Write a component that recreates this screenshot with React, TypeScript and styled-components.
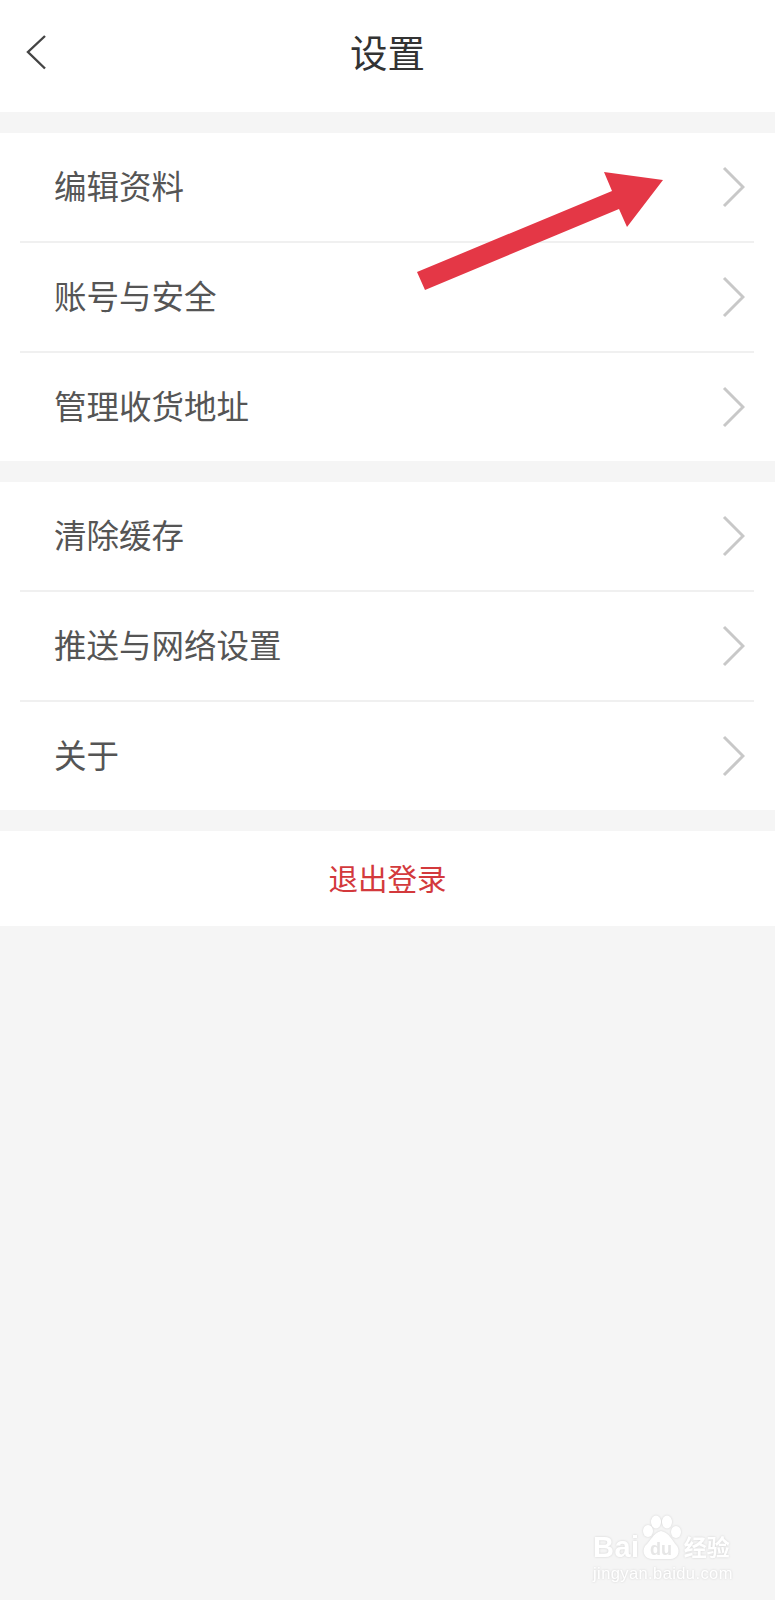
import React from "react";
import styled, { createGlobalStyle } from "styled-components";

const GlobalStyle = createGlobalStyle`
  html, body {
    margin: 0;
    padding: 0;
    background: #f5f5f5;
  }
  body {
    font-family: "Liberation Sans", "Noto Sans CJK SC", sans-serif;
  }
`;

const Page = styled.div`
  position: relative;
  width: 775px;
  height: 1600px;
  overflow: hidden;
  background: #f5f5f5;
`;

const Header = styled.header`
  position: relative;
  display: flex;
  align-items: center;
  justify-content: center;
  height: 112px;
  background: #fff;
  margin-bottom: 21px;
`;

const Title = styled.h1`
  margin: 0 0 12px;
  font-size: 37.5px;
  font-weight: 400;
  color: #333;
`;

const BackIcon = styled.svg`
  position: absolute;
  left: 25px;
  top: 33px;
  width: 24px;
  height: 38px;
  fill: none;
  stroke: #444;
  stroke-width: 2.4;
`;

const Group = styled.section`
  background: #fff;
  margin-bottom: 21px;
`;

const Row = styled.div<{ $height: number }>`
  display: flex;
  align-items: center;
  justify-content: space-between;
  box-sizing: border-box;
  height: ${(p) => p.$height}px;
  margin-left: 20px;
  margin-right: 21px;
  padding: 0 9px 0 34px;

  & + & {
    border-top: 2px solid #f0f0f0;
  }
`;

const RowLabel = styled.span`
  font-size: 32.5px;
  color: #555;
  margin-bottom: 5px;
`;

const Chevron = styled.svg`
  width: 24px;
  height: 42px;
  fill: none;
  stroke: #c8c8c8;
  stroke-width: 3;
`;

const LogoutBar = styled.div`
  display: flex;
  align-items: center;
  justify-content: center;
  height: 95px;
  background: #fff;
`;

const LogoutLabel = styled.span`
  font-size: 29.5px;
  color: #d3393c;
  margin-bottom: 4px;
`;

const PointerArrow = styled.svg`
  position: absolute;
  left: 410px;
  top: 165px;
  width: 260px;
  height: 135px;
`;

const Watermark = styled.div`
  position: absolute;
  left: 593px;
  top: 1515px;
  width: 150px;
  color: #fff;
  filter: drop-shadow(0 0 1px rgba(0, 0, 0, 0.14));
`;

const MarkTop = styled.div`
  display: flex;
  align-items: flex-end;
  height: 46px;
`;

const MarkWord = styled.span`
  font-size: 29px;
  line-height: 28px;
  font-weight: 700;
  letter-spacing: 0.5px;
`;

const MarkPaw = styled.svg`
  width: 42px;
  height: 46px;
  margin: 0 1px 0 0;
  flex: none;
`;

const MarkCjk = styled.span`
  font-size: 23px;
  line-height: 26px;
  font-weight: 700;
  margin-left: 1px;
`;

const MarkUrl = styled.div`
  margin-top: 4px;
  font-size: 16.5px;
  line-height: 17px;
  letter-spacing: 0.4px;
  white-space: nowrap;
`;

const sections = [
  ["编辑资料", "账号与安全", "管理收货地址"],
  ["清除缓存", "推送与网络设置", "关于"],
];

const Arrowhead = () => (
  <Chevron viewBox="0 0 24 42">
    <polyline points="3,2 22,21 3,40" />
  </Chevron>
);

export default function App() {
  return (
    <Page>
      <GlobalStyle />
      <Header>
        <BackIcon viewBox="0 0 24 38">
          <polyline points="20,3 3,19 20,35.5" />
        </BackIcon>
        <Title>设置</Title>
      </Header>

      {sections.map((items) => (
        <Group key={items[0]}>
          {items.map((label, i) => (
            <Row key={label} $height={i === 0 ? 108 : 110}>
              <RowLabel>{label}</RowLabel>
              <Arrowhead />
            </Row>
          ))}
        </Group>
      ))}

      <LogoutBar>
        <LogoutLabel>退出登录</LogoutLabel>
      </LogoutBar>

      {/* red annotation arrow, coordinates are local to the svg box */}
      <PointerArrow viewBox="0 0 260 135">
        <polygon
          points="7,107 15,125 209,44 217,62 253,15 194,7 202,26"
          fill="#e43746"
        />
      </PointerArrow>

      <Watermark>
        <MarkTop>
          <MarkWord>Bai</MarkWord>
          <MarkPaw viewBox="0 0 42 46">
            <g fill="#fff">
              <ellipse cx="8" cy="16" rx="5" ry="6" />
              <ellipse cx="16" cy="7" rx="5" ry="6.5" />
              <ellipse cx="27" cy="7" rx="5" ry="6.5" />
              <ellipse cx="36" cy="17" rx="5" ry="6" />
              <path d="M21 16 C13 18 11 26 5 31 C1 38 6 45 14 44 L29 44 C37 45 41 37 37 31 C32 26 30 18 21 16 Z" />
            </g>
            <text
              x="21"
              y="40"
              textAnchor="middle"
              fontSize="18"
              fontWeight="700"
              fontFamily="Liberation Sans, sans-serif"
              fill="#e6e6e6"
            >
              du
            </text>
          </MarkPaw>
          <MarkCjk>经验</MarkCjk>
        </MarkTop>
        <MarkUrl>jingyan.baidu.com</MarkUrl>
      </Watermark>
    </Page>
  );
}
